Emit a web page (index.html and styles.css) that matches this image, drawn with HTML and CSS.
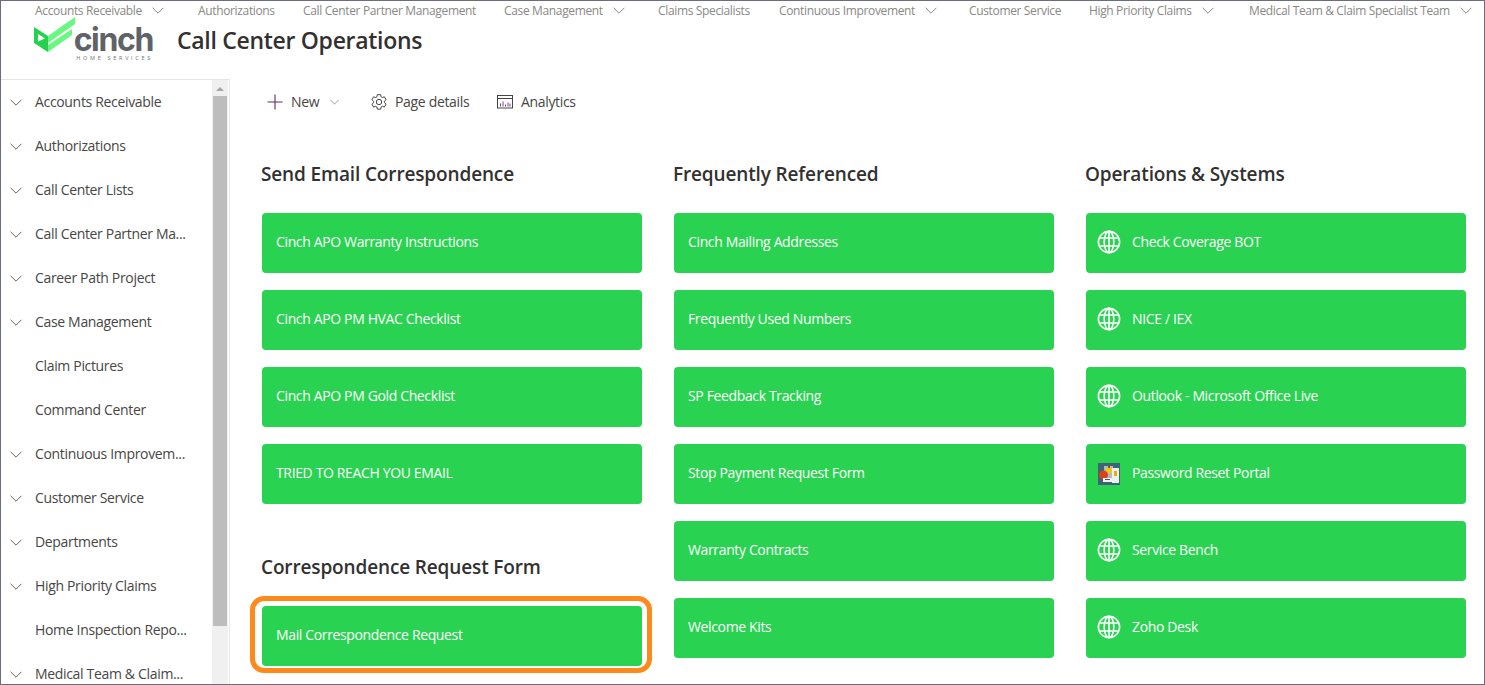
FILE: index.html
```html
<!DOCTYPE html>
<html lang="en">
<head>
<meta charset="utf-8">
<title>Call Center Operations</title>
<link rel="stylesheet" href="styles.css">
</head>
<body>
<svg class="defs" width="0" height="0" aria-hidden="true">
  <symbol id="chev" viewBox="0 0 12 7"><path d="M.6.8 6 6.2 11.4.8" fill="none" stroke="currentColor" stroke-width="1"/></symbol>
  <symbol id="globe" viewBox="0 0 24 24"><g fill="none" stroke="#fff" stroke-width="1.6"><circle cx="12" cy="12" r="10.600"/><ellipse cx="12" cy="12" rx="4.800" ry="10.600"/><path d="M12 1.400v21.200M2.200 8h19.600M2.200 16h19.600"/></g></symbol>
</svg>
<div class="frame">
  <header class="header">
    <nav class="topnav">
      <span class="tn w1">Accounts Receivable<svg class="tchev"><use href="#chev"/></svg></span>
      <span class="tn w2">Authorizations</span>
      <span class="tn w3">Call Center Partner Management</span>
      <span class="tn w4">Case Management<svg class="tchev"><use href="#chev"/></svg></span>
      <span class="tn w5">Claims Specialists</span>
      <span class="tn w6">Continuous Improvement<svg class="tchev"><use href="#chev"/></svg></span>
      <span class="tn w7">Customer Service</span>
      <span class="tn w8">High Priority Claims<svg class="tchev"><use href="#chev"/></svg></span>
      <span class="tn w9">Medical Team &amp; Claim Specialist Team<svg class="tchev"><use href="#chev"/></svg></span>
    </nav>
    <div class="brand">
      <div class="logo">
        <svg class="mark" viewBox="0 0 41 36" aria-hidden="true">
          <path d="M0 10 14 19V35L0 26Z" fill="#25d24e"/>
          <path d="M4 17 11 21.500 4 24.500Z" fill="#fff"/>
          <path d="M14 19 41 0V7L14 26Z" fill="#68f781"/>
          <path d="M14 28 38 12V18L14 35Z" fill="#68f781"/>
        </svg>
        <div class="wordmark">
          <span class="cinch">cinch</span>
          <span class="home">HOME SERVICES</span>
        </div>
      </div>
      <h1 class="title">Call Center Operations</h1>
    </div>
  </header>
  <div class="body">
    <aside class="side">
      <ul class="sidelist">
        <li class="si"><svg class="schev"><use href="#chev"/></svg><span class="sl">Accounts Receivable</span></li>
        <li class="si"><svg class="schev"><use href="#chev"/></svg><span class="sl">Authorizations</span></li>
        <li class="si"><svg class="schev"><use href="#chev"/></svg><span class="sl">Call Center Lists</span></li>
        <li class="si"><svg class="schev"><use href="#chev"/></svg><span class="sl">Call Center Partner Ma...</span></li>
        <li class="si"><svg class="schev"><use href="#chev"/></svg><span class="sl">Career Path Project</span></li>
        <li class="si"><svg class="schev"><use href="#chev"/></svg><span class="sl">Case Management</span></li>
        <li class="si plain"><span class="sl">Claim Pictures</span></li>
        <li class="si plain"><span class="sl">Command Center</span></li>
        <li class="si"><svg class="schev"><use href="#chev"/></svg><span class="sl">Continuous Improvem...</span></li>
        <li class="si"><svg class="schev"><use href="#chev"/></svg><span class="sl">Customer Service</span></li>
        <li class="si"><svg class="schev"><use href="#chev"/></svg><span class="sl">Departments</span></li>
        <li class="si"><svg class="schev"><use href="#chev"/></svg><span class="sl">High Priority Claims</span></li>
        <li class="si plain"><span class="sl">Home Inspection Repo...</span></li>
        <li class="si"><svg class="schev"><use href="#chev"/></svg><span class="sl">Medical Team &amp; Claim...</span></li>
      </ul>
      <div class="scrollbar">
        <span class="arrow"></span>
        <span class="thumb"></span>
      </div>
    </aside>
    <main class="main">
      <div class="cmdbar">
        <span class="cmd c-new">
          <svg class="ic16" viewBox="0 0 16 16"><path d="M8 .5v15M.5 8h15" fill="none" stroke="#5c2e5c" stroke-width="1.100"/></svg>New
          <svg class="nchev"><use href="#chev"/></svg>
        </span>
        <span class="cmd c-page">
          <svg class="ic16" viewBox="1 0 14 15.400"><g fill="none" stroke="#444" stroke-width=".95"><path d="M6.400.6h3.200l.4 2.100 1.200.7 2-.7 1.600 2.800-1.600 1.400v1.400l1.600 1.400-1.600 2.800-2-.7-1.200.7-.4 2.100H6.400L6 12.600l-1.200-.7-2 .7-1.600-2.800 1.600-1.400V7L1.200 5.500l1.600-2.800 2 .7L6 2.700Z"/><circle cx="8" cy="7.700" r="2.600"/></g></svg>Page details
        </span>
        <span class="cmd">
          <svg class="ic16" viewBox="0 0 16 16"><g fill="none" stroke="#444"><rect x=".5" y="1.500" width="15" height="12.500"/><path d="M.5 4.500h15"/><path stroke="#7b3f98" d="M3.500 12.500v-3M6 12.500v-5M8.500 12.500v-2M11 12.500v-4M13 12.500v-3"/></g></svg>Analytics
        </span>
      </div>
      <div class="cols">
        <section class="col">
          <h2 class="head">Send Email Correspondence</h2>
          <div class="btns">
            <a class="btn">Cinch APO Warranty Instructions</a>
            <a class="btn">Cinch APO PM HVAC Checklist</a>
            <a class="btn">Cinch APO PM Gold Checklist</a>
            <a class="btn">TRIED TO REACH YOU EMAIL</a>
          </div>
          <h2 class="head head2">Correspondence Request Form</h2>
          <div class="btns">
            <a class="btn ringed">Mail Correspondence Request</a>
          </div>
        </section>
        <section class="col">
          <h2 class="head">Frequently Referenced</h2>
          <div class="btns">
            <a class="btn">Cinch Mailing Addresses</a>
            <a class="btn">Frequently Used Numbers</a>
            <a class="btn">SP Feedback Tracking</a>
            <a class="btn">Stop Payment Request Form</a>
            <a class="btn">Warranty Contracts</a>
            <a class="btn">Welcome Kits</a>
          </div>
        </section>
        <section class="col">
          <h2 class="head">Operations &amp; Systems</h2>
          <div class="btns">
            <a class="btn"><svg class="bic"><use href="#globe"/></svg>Check Coverage BOT</a>
            <a class="btn"><svg class="bic"><use href="#globe"/></svg>NICE / IEX</a>
            <a class="btn"><svg class="bic"><use href="#globe"/></svg>Outlook - Microsoft Office Live</a>
            <a class="btn">
              <svg class="pw" viewBox="0 0 22 22">
                <rect width="22" height="22" fill="#3d6476"/>
                <rect x="6" y="3" width="9" height="13" fill="#aebbc0"/>
                <rect x="14" y="5" width="7" height="15" fill="#eef0ea"/>
                <rect x="16" y="8" width="3" height="5" fill="#f2a71b"/>
                <rect x="8" y="5" width="6" height="5" fill="#f4c518"/>
                <rect x="10" y="2" width="2" height="3" fill="#7a5a10"/>
                <circle cx="5.500" cy="12" r="4.500" fill="#d9431a"/>
                <rect x="5" y="15" width="9" height="4" fill="#f2f2ee"/>
                <rect x="7" y="16" width="5" height="1" fill="#556"/>
              </svg>Password Reset Portal
            </a>
            <a class="btn"><svg class="bic"><use href="#globe"/></svg>Service Bench</a>
            <a class="btn"><svg class="bic"><use href="#globe"/></svg>Zoho Desk</a>
          </div>
        </section>
      </div>
    </main>
  </div>
</div>
</body>
</html>
```
FILE: styles.css
```css
* { box-sizing: border-box; }
html, body { margin: 0; height: 100%; overflow: hidden; }
body { font-family: "Open Sans", "Noto Sans", sans-serif; color: #323130; background: #fff; }
.defs { position: absolute; }
.frame { width: 1485px; height: 685px; border: 1px solid #6b6e7a; display: flex; flex-direction: column; overflow: hidden; }

.header { height: 78px; flex: none; }
.topnav { display: flex; padding-left: 34px; height: 18px; align-items: center; }
.tn { display: flex; align-items: center; font-size: 12px; letter-spacing: -.35px; color: #8a8886; white-space: nowrap; flex: none; }
.w1 { width: 163px; }
.w2 { width: 105px; }
.w3 { width: 201px; }
.w4 { width: 154px; }
.w5 { width: 121px; }
.w6 { width: 190px; }
.w7 { width: 120px; }
.w8 { width: 160px; }
.tchev { width: 12px; height: 7px; margin-left: 10px; color: #8a8886; flex: none; }

.brand { display: flex; align-items: flex-start; height: 60px; }
.logo { display: flex; align-items: flex-start; padding-left: 33px; width: 176px; height: 50px; flex: none; }
.mark { width: 41px; height: 36px; margin-top: -2px; flex: none; }
.wordmark { width: 78px; margin-top: 9px; display: flex; flex-direction: column; align-items: flex-end; }
.cinch { font-family: "Inter", "Open Sans", sans-serif; font-weight: 700; font-size: 32px; line-height: 24px; letter-spacing: -1.360px; color: #5f6369; }
.home { font-size: 5.500px; line-height: 8px; letter-spacing: 2.700px; color: #6d7076; white-space: nowrap; margin-top: 2px; }
.title { margin: 1px 0 0; font-size: 23px; line-height: 40px; font-weight: 600; letter-spacing: -.3px; color: #323130; white-space: nowrap; }

.body { flex: 1; display: flex; min-height: 0; }
.side { width: 229px; flex: none; display: flex; border-top: 1px solid #e6e6e6; border-right: 1px solid #e6e6e6; overflow: hidden; }
.sidelist { list-style: none; margin: 0; padding: 0; flex: 1; min-width: 0; }
.si { height: 44px; display: flex; align-items: center; padding: 0 0 2px 9px; font-size: 14px; letter-spacing: -.33px; color: #484644; white-space: nowrap; }
.si.plain { padding-left: 34px; }
.schev { width: 12px; height: 7px; margin: 2px 13px 0 0; color: #7a5c50; flex: none; }
.scrollbar { width: 16px; flex: none; background: #f0f0f0; margin-right: 1px; display: flex; flex-direction: column; align-items: center; }
.arrow { width: 0; height: 0; margin: 7px 0 5px; border-left: 4px solid transparent; border-right: 4px solid transparent; border-bottom: 4px solid #a6a6a6; }
.thumb { width: 14px; height: 530px; background: #bdbdbd; flex: none; }

.main { flex: 1; min-width: 0; padding-left: 32px; }
.cmdbar { display: flex; align-items: center; height: 46px; padding: 0 0 2px 5px; font-size: 14px; letter-spacing: -.33px; color: #484644; }
.cmd { display: flex; align-items: center; white-space: nowrap; }
.ic16 { width: 16px; height: 16px; margin: 2px 8px 0 0; flex: none; }
.c-new { width: 104px; }
.c-page { width: 126px; }
.nchev { width: 9px; height: 6px; margin: 2px 0 0 11px; color: #7a7a7a; }

.cols { display: flex; gap: 32px; margin-top: 36px; }
.col { width: 380px; flex: none; }
.head { margin: 0 0 25px -1px; font-size: 19px; line-height: 27px; font-weight: 600; letter-spacing: -.14px; color: #323130; white-space: nowrap; }
.head2 { margin-top: 50px; }
.btns { display: flex; flex-direction: column; gap: 17px; }
.btn { position: relative; display: flex; align-items: center; height: 60px; padding: 0 0 4px 14px; border-radius: 4px; background: #2ad251; color: #fff; font-size: 14px; letter-spacing: -.36px; white-space: nowrap; }
.bic { width: 24px; height: 24px; margin: 2px 11px 0 -3px; flex: none; }
.pw { width: 22px; height: 22px; margin: 4px 12px 0 -2px; flex: none; }
.ringed::after { content: ""; position: absolute; left: -12px; right: -10px; top: -10px; bottom: -7px; border: 5px solid #ff8a1c; border-radius: 14px; }
```
